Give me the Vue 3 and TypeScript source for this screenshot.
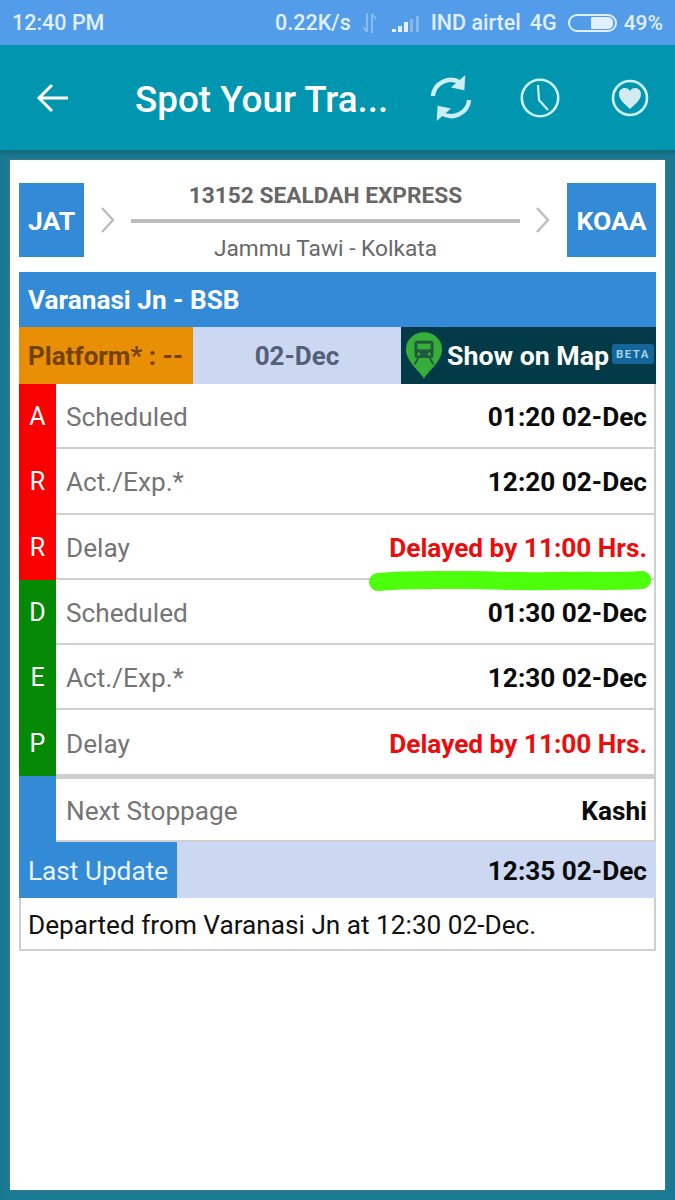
<script setup lang="ts">
interface Row { side: string; label: string; value: string; delay?: boolean }

const arrival: Row[] = [
  { side: 'A', label: 'Scheduled', value: '01:20 02-Dec' },
  { side: 'R', label: 'Act./Exp.*', value: '12:20 02-Dec' },
  { side: 'R', label: 'Delay', value: 'Delayed by 11:00 Hrs.', delay: true },
]
const departure: Row[] = [
  { side: 'D', label: 'Scheduled', value: '01:30 02-Dec' },
  { side: 'E', label: 'Act./Exp.*', value: '12:30 02-Dec' },
  { side: 'P', label: 'Delay', value: 'Delayed by 11:00 Hrs.', delay: true },
]
</script>

<template>
  <div class="screen">
    <div class="status">
      <span class="time">12:40 PM</span>
      <div class="status-right">
        <span>0.22K/s</span>
        <svg class="updown" width="18" height="22" viewBox="0 0 18 22">
          <path d="M6 1v19M6 20l-4-5" fill="none" stroke="#86bdf0" stroke-width="2" />
          <path d="M11 21V2M11 2l4 5" fill="none" stroke="#86bdf0" stroke-width="2" />
        </svg>
        <svg class="signal" width="28" height="18" viewBox="0 0 28 18">
          <rect x="0" y="14" width="4" height="3" fill="#e4f1fc" />
          <rect x="6" y="11" width="4" height="6" fill="#e4f1fc" />
          <rect x="12" y="7" width="4" height="10" fill="#e4f1fc" />
          <rect x="18" y="4" width="3" height="13" fill="#84bcee" />
          <rect x="24" y="1" width="3" height="16" fill="#84bcee" />
        </svg>
        <span class="carrier">IND airtel</span>
        <span>4G</span>
        <div class="battery"><div class="battery-fill"></div></div>
        <span class="percent">49%</span>
      </div>
    </div>

    <header class="appbar">
      <svg class="back" width="34" height="34" viewBox="0 0 34 34">
        <path d="M32 17H4M16 4L3 17l13 13" fill="none" stroke="#fff" stroke-width="3" />
      </svg>
      <h1 class="title">Spot Your Tra...</h1>
      <svg class="ic-refresh" width="42" height="46" viewBox="0 0 44 48">
        <path d="M3 22A19 19 0 0 1 32 8" fill="none" stroke="#cdeef5" stroke-width="4.5" />
        <path d="M37 0l-1 16-14-3z" fill="#cdeef5" />
        <path d="M41 26A19 19 0 0 1 12 40" fill="none" stroke="#cdeef5" stroke-width="4.5" />
        <path d="M7 48l1-16 14 3z" fill="#cdeef5" />
      </svg>
      <svg class="ic-clock" width="40" height="40" viewBox="0 0 40 40">
        <circle cx="20" cy="20" r="18.2" fill="none" stroke="#cdf3f8" stroke-width="2.6" />
        <path d="M18 7l1 15 9 10" fill="none" stroke="#cdf3f8" stroke-width="2.2" />
      </svg>
      <svg class="ic-heart" width="38" height="38" viewBox="0 0 38 38">
        <circle cx="19" cy="19" r="17" fill="none" stroke="#cdf3f8" stroke-width="2.6" />
        <path d="M19 30C14 25 8 21 8 15c0-3.500 2.500-6 5.800-6 2.300 0 4.200 1.200 5.200 3 1-1.800 2.900-3 5.200-3 3.300 0 5.800 2.500 5.800 6 0 6-6 10-11 15z" fill="#d5ebf2" />
      </svg>
    </header>

    <main class="page">
      <section class="card">
        <div class="train">
          <div class="code code-from">JAT</div>
          <svg class="chev chev-left" width="16" height="26" viewBox="0 0 16 26">
            <path d="M2 1l11 12L2 25" fill="none" stroke="#bdbdbd" stroke-width="2.4" />
          </svg>
          <div class="train-mid">
            <div class="train-name">13152 SEALDAH EXPRESS</div>
            <div class="train-line"></div>
            <div class="train-route">Jammu Tawi - Kolkata</div>
          </div>
          <svg class="chev chev-right" width="16" height="26" viewBox="0 0 16 26">
            <path d="M2 1l11 12L2 25" fill="none" stroke="#bdbdbd" stroke-width="2.4" />
          </svg>
          <div class="code code-to">KOAA</div>
        </div>

        <div class="station">Varanasi Jn - BSB</div>

        <div class="info">
          <div class="platform">Platform* : --</div>
          <div class="date">02-Dec</div>
          <div class="map">
            <svg class="pin" width="38" height="50" viewBox="0 0 40 50">
              <path d="M20 49C15 40 1 31 1 18a19 18 0 0 1 38 0c0 13-14 22-19 31z" fill="#37ad3a" />
              <path d="M13 9h14a3 3 0 0 1 3 3v12a3 3 0 0 1-3 3H13a3 3 0 0 1-3-3V12a3 3 0 0 1 3-3z" fill="#1f5a3a" />
              <rect x="13" y="12" width="14" height="6" fill="#37ad3a" />
              <circle cx="14.500" cy="23" r="1.600" fill="#37ad3a" />
              <circle cx="25.500" cy="23" r="1.600" fill="#37ad3a" />
              <path d="M14 27l-4 7M26 27l4 7" stroke="#1f5a3a" stroke-width="2" />
            </svg>
            <span class="map-text">Show on Map</span>
            <span class="beta">BETA</span>
          </div>
        </div>

        <div class="group">
          <div class="side side-red">
            <span v-for="(r, i) in arrival" :key="i">{{ r.side }}</span>
          </div>
          <div class="rows">
            <div v-for="(r, i) in arrival" :key="i" class="row">
              <span class="label">{{ r.label }}</span>
              <span class="value" :class="{ late: r.delay }">{{ r.value }}</span>
            </div>
          </div>
          <svg class="marker" width="284" height="22" viewBox="0 0 284 22">
            <path d="M10 12C40 9 70 10 100 10s50 2 80 1 60 1 94-1" fill="none" stroke="#4dff0a" stroke-width="18" stroke-linecap="round" />
          </svg>
        </div>

        <div class="group">
          <div class="side side-green">
            <span v-for="(r, i) in departure" :key="i">{{ r.side }}</span>
          </div>
          <div class="rows">
            <div v-for="(r, i) in departure" :key="i" class="row">
              <span class="label">{{ r.label }}</span>
              <span class="value" :class="{ late: r.delay }">{{ r.value }}</span>
            </div>
          </div>
        </div>

        <div class="group">
          <div class="side side-blue"></div>
          <div class="rows">
            <div class="row row-next">
              <span class="label">Next Stoppage</span>
              <span class="value">Kashi</span>
            </div>
          </div>
        </div>

        <div class="update">
          <div class="update-label">Last Update</div>
          <div class="update-value">12:35 02-Dec</div>
        </div>

        <div class="message">Departed from Varanasi Jn at 12:30 02-Dec.</div>
      </section>
    </main>
  </div>
</template>

<style>
html, body { margin: 0; background: #1a7a94; }
</style>

<style scoped>
.screen {
  width: 675px;
  height: 1200px;
  display: flex;
  flex-direction: column;
  font-family: Roboto, "Liberation Sans", sans-serif;
  overflow: hidden;
  background: #1a7a94;
}

.status {
  height: 45px;
  background: #539cea;
  color: #e0f0fc;
  font-size: 21.500px;
  font-weight: 500;
  display: flex;
  align-items: center;
  justify-content: space-between;
  padding: 0 12px;
}
.status-right { display: flex; align-items: center; }
.updown { margin-left: 10px; }
.signal { margin-left: 13px; margin-top: 2px; }
.carrier { margin-left: 11px; margin-right: 9px; }
.percent { font-size: 21px; }
.battery {
  width: 49px;
  height: 18px;
  border: 2px solid #e0f0fc;
  border-radius: 10px;
  margin: 0 7px 0 11px;
  display: flex;
  justify-content: flex-end;
  align-items: center;
  padding-right: 2px;
  box-sizing: border-box;
}
.battery-fill { width: 22px; height: 12px; background: #e0f0fc; border-radius: 1px 5px 5px 1px; }

.appbar {
  height: 105px;
  background: #0096b0;
  display: flex;
  align-items: center;
}
.back { margin-left: 36px; flex: none; }
.title {
  margin: 0 0 0 65px;
  padding-top: 4px;
  width: 295px;
  flex: none;
  color: #fff;
  font-size: 36.800px;
  font-weight: 500;
  white-space: nowrap;
}
.ic-refresh { flex: none; }
.ic-clock { flex: none; margin-left: 48px; margin-top: 1px; }
.ic-heart { flex: none; margin-left: 51px; margin-top: 1px; }

.page {
  flex: 1;
  padding: 10px;
  display: flex;
  box-shadow: inset 0 6px 6px -4px #155f73;
}
.card {
  flex: 1;
  background: #fff;
  padding: 23px 9px 0 9px;
  display: flex;
  flex-direction: column;
  box-shadow: 0 0 2px #777;
}

.train { display: flex; align-items: center; height: 74px; }
.code {
  height: 74px;
  background: #338ad6;
  color: #fff;
  font-weight: 700;
  font-size: 26.500px;
  display: flex;
  align-items: center;
  justify-content: center;
  flex: none;
}
.code-from { width: 65px; }
.code-to { width: 89px; }
.chev { flex: none; }
.chev-left { margin: 0 15px 0 16px; }
.chev-right { margin: 0 16px 0 15px; }
.train-mid {
  flex: 1;
  text-align: center;
  display: flex;
  flex-direction: column;
  height: 74px;
  justify-content: space-between;
  color: #676767;
}
.train-name { font-size: 22.700px; font-weight: 700; line-height: 25px; }
.train-line { height: 4px; background: #bdbdbd; margin-top: -3px; }
.train-route { font-size: 22.700px; line-height: 25px; margin-bottom: -4px; }

.station {
  margin-top: 15px;
  height: 55px;
  background: #338ad6;
  color: #fff;
  font-size: 26.200px;
  font-weight: 700;
  display: flex;
  align-items: center;
  padding-left: 9px;
  box-sizing: border-box;
}

.info { display: flex; height: 57px; }
.platform {
  width: 174px;
  background: #e88f06;
  color: #744100;
  font-size: 26px;
  font-weight: 700;
  display: flex;
  align-items: center;
  padding-left: 9px;
  box-sizing: border-box;
  white-space: nowrap;
}
.date {
  width: 208px;
  background: #ccd8f2;
  color: #555f78;
  font-size: 26px;
  font-weight: 700;
  display: flex;
  align-items: center;
  justify-content: center;
}
.map {
  flex: 1;
  background: #023a47;
  display: flex;
  align-items: center;
  color: #fff;
  white-space: nowrap;
}
.pin { margin-left: 4px; flex: none; }
.map-text { margin-left: 4px; font-size: 26.700px; font-weight: 700; }
.beta {
  margin-left: 3px;
  background: #15649a;
  color: #9fd4ee;
  font-size: 11.500px;
  font-weight: 700;
  letter-spacing: 1.400px;
  padding: 3px 4px;
  border-radius: 3px;
  margin-bottom: 4px;
}

.group { display: flex; position: relative; }
.side {
  width: 37px;
  flex: none;
  color: #fff;
  font-size: 25px;
  display: flex;
  flex-direction: column;
}
.side span { flex: 1; display: flex; align-items: center; justify-content: center; }
.side-red { background: #fb0000; }
.side-green { background: #058a05; }
.side-blue { background: #338ad6; }
.rows { flex: 1; }
.row {
  height: 65.300px;
  box-sizing: border-box;
  border: 2px solid #cfcfcf;
  border-width: 0 2px 2px 0;
  display: flex;
  align-items: center;
  justify-content: space-between;
  padding: 3px 7px 0 10px;
}
.label { color: #757575; font-size: 26.200px; }
.value { color: #0a0a0a; font-size: 26.200px; font-weight: 700; }
.late { color: #ed0c0c; }
.marker {
  position: absolute;
  left: 349px;
  bottom: -12px;
}

.row-next { height: 66px; border-top-width: 3px; }

.update { display: flex; height: 56px; background: #ccd8f2; }
.update-label {
  width: 158px;
  background: #338ad6;
  color: #e8f4ff;
  font-size: 26.200px;
  display: flex;
  align-items: center;
  padding: 2px 0 0 9px;
  box-sizing: border-box;
}
.update-value {
  flex: 1;
  color: #0a0a0a;
  font-size: 26.200px;
  font-weight: 700;
  display: flex;
  align-items: center;
  justify-content: flex-end;
  padding: 2px 9px 0 0;
}
.message {
  border: 2px solid #cfcfcf;
  border-top: 0;
  height: 53px;
  box-sizing: border-box;
  display: flex;
  align-items: center;
  padding: 3px 0 0 7px;
  color: #111;
  font-size: 26.200px;
}
</style>
